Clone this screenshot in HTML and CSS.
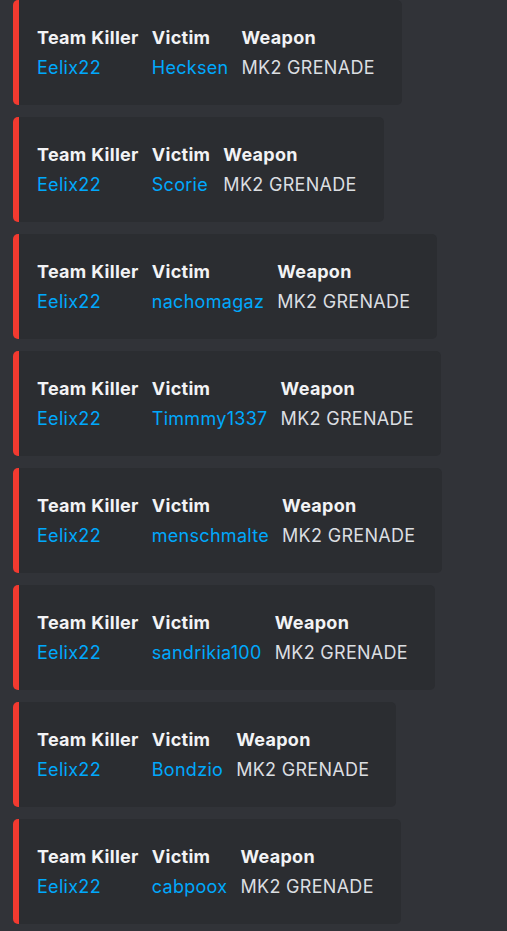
FILE: index.html
```html
<!DOCTYPE html>
<html lang="en">
<head>
    <meta charset="UTF-8">
    <meta name="viewport" content="width=device-width, initial-scale=1.0">
    <title>Team Kills</title>
    <link rel="stylesheet" href="styles.css">
</head>
<body>
    <main class="feed">
        <div class="embed">
            <div class="field"><div class="field-name">Team Killer</div><div class="field-value link">Eelix22</div></div>
            <div class="field"><div class="field-name">Victim</div><div class="field-value link">Hecksen</div></div>
            <div class="field"><div class="field-name">Weapon</div><div class="field-value">MK2 GRENADE</div></div>
        </div>
        <div class="embed">
            <div class="field"><div class="field-name">Team Killer</div><div class="field-value link">Eelix22</div></div>
            <div class="field"><div class="field-name">Victim</div><div class="field-value link">Scorie</div></div>
            <div class="field"><div class="field-name">Weapon</div><div class="field-value">MK2 GRENADE</div></div>
        </div>
        <div class="embed">
            <div class="field"><div class="field-name">Team Killer</div><div class="field-value link">Eelix22</div></div>
            <div class="field"><div class="field-name">Victim</div><div class="field-value link">nachomagaz</div></div>
            <div class="field"><div class="field-name">Weapon</div><div class="field-value">MK2 GRENADE</div></div>
        </div>
        <div class="embed">
            <div class="field"><div class="field-name">Team Killer</div><div class="field-value link">Eelix22</div></div>
            <div class="field"><div class="field-name">Victim</div><div class="field-value link">Timmmy1337</div></div>
            <div class="field"><div class="field-name">Weapon</div><div class="field-value">MK2 GRENADE</div></div>
        </div>
        <div class="embed">
            <div class="field"><div class="field-name">Team Killer</div><div class="field-value link">Eelix22</div></div>
            <div class="field"><div class="field-name">Victim</div><div class="field-value link">menschmalte</div></div>
            <div class="field"><div class="field-name">Weapon</div><div class="field-value">MK2 GRENADE</div></div>
        </div>
        <div class="embed">
            <div class="field"><div class="field-name">Team Killer</div><div class="field-value link">Eelix22</div></div>
            <div class="field"><div class="field-name">Victim</div><div class="field-value link">sandrikia100</div></div>
            <div class="field"><div class="field-name">Weapon</div><div class="field-value">MK2 GRENADE</div></div>
        </div>
        <div class="embed">
            <div class="field"><div class="field-name">Team Killer</div><div class="field-value link">Eelix22</div></div>
            <div class="field"><div class="field-name">Victim</div><div class="field-value link">Bondzio</div></div>
            <div class="field"><div class="field-name">Weapon</div><div class="field-value">MK2 GRENADE</div></div>
        </div>
        <div class="embed">
            <div class="field"><div class="field-name">Team Killer</div><div class="field-value link">Eelix22</div></div>
            <div class="field"><div class="field-name">Victim</div><div class="field-value link">cabpoox</div></div>
            <div class="field"><div class="field-name">Weapon</div><div class="field-value">MK2 GRENADE</div></div>
        </div>
    </main>
</body>
</html>
```

FILE: styles.css
```css
:root {
    --page-bg: #313338;
    --embed-bg: #2b2d31;
    --embed-color: #f23a30;
    --name-color: #f2f3f5;
    --value-color: #dbdee1;
    --link-color: #00a8fc;
}

* {
    box-sizing: border-box;
    margin: 0;
    padding: 0;
}

body {
    background-color: var(--page-bg);
    font-family: 'Inter', 'Noto Sans', sans-serif;
    font-size: 18px;
    letter-spacing: 0.3px;
    padding: 0 0 0 13px;
}

.feed {
    display: flex;
    flex-direction: column;
    align-items: flex-start;
    gap: 12px;
}

.embed {
    display: flex;
    gap: 13px;
    height: 105px;
    background-color: var(--embed-bg);
    border-left: 6px solid var(--embed-color);
    border-radius: 5px;
    padding: 27px 27px 0 18px;
}

.field-name {
    color: var(--name-color);
    font-weight: 700;
    line-height: 22px;
    margin-bottom: 8px;
}

.field-value {
    color: var(--value-color);
    line-height: 22px;
}

.field-value.link {
    color: var(--link-color);
}
```
